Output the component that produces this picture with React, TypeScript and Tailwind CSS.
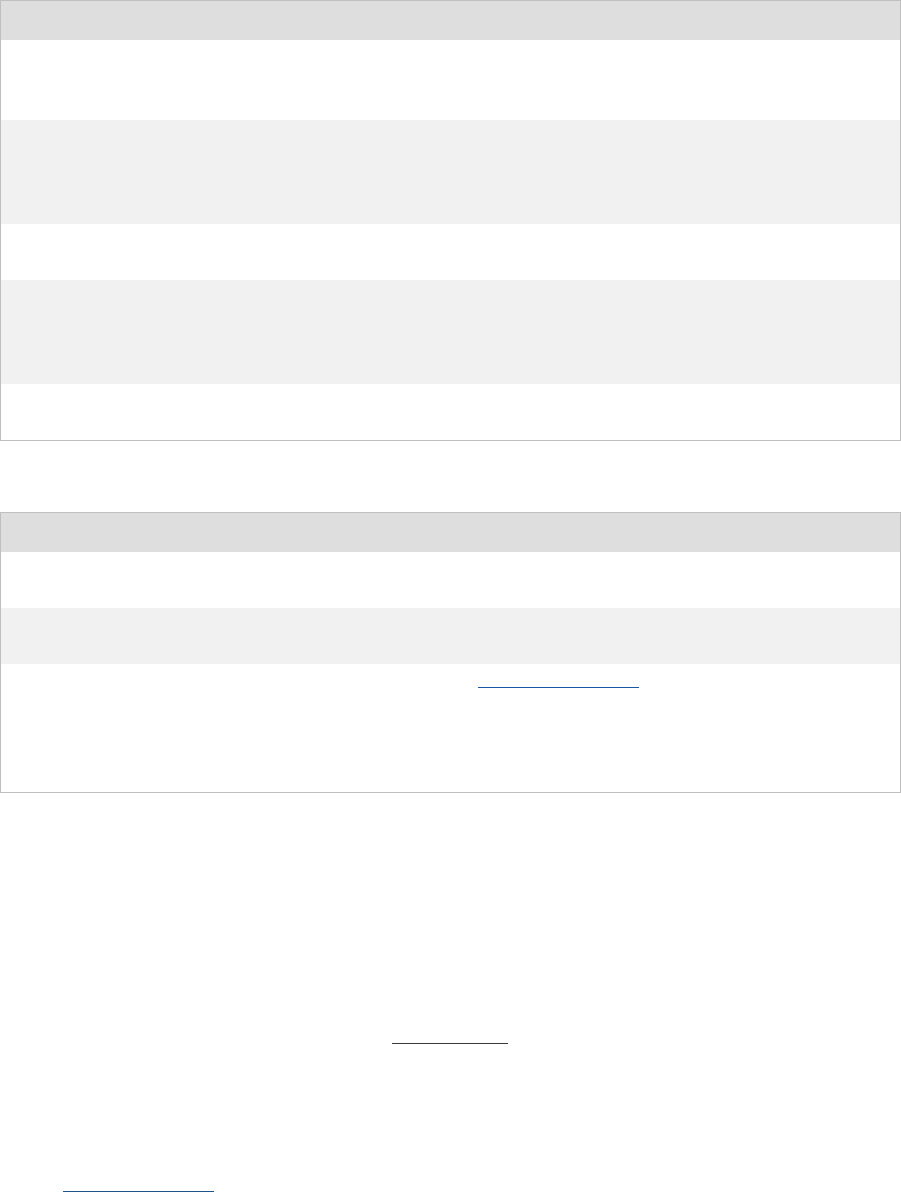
import React from "react";

export default function App() {
  return (
    <div className="w-[901px] min-h-[1192px] bg-white" style={{ fontFamily: '"Liberation Sans", Arial, sans-serif' }}>
      <div className="border border-[#bfbfbf]">
        <div className="h-[39px] bg-[#dedede]" />
        <div className="h-[80px] bg-white" />
        <div className="h-[104px] bg-[#f1f1f1]" />
        <div className="h-[56px] bg-white" />
        <div className="h-[104px] bg-[#f1f1f1]" />
        <div className="h-[56px] bg-white" />
      </div>

      <div className="mt-[71px] border border-[#bfbfbf]">
        <div className="h-[39px] bg-[#dedede]" />
        <div className="h-[56px] bg-white" />
        <div className="h-[56px] bg-[#f1f1f1]" />
        <div className="h-[128px] bg-white pt-[23px]">
          <div className="ml-[477px] h-px w-[161px] bg-[#1458a3]" />
        </div>
      </div>

      <div className="mt-[250px] ml-[392px] h-px w-[116px] bg-[#3a3a3a]" />
      <div className="mt-[147px] ml-[63px] h-px w-[151px] bg-[#1f5389]" />
    </div>
  );
}
